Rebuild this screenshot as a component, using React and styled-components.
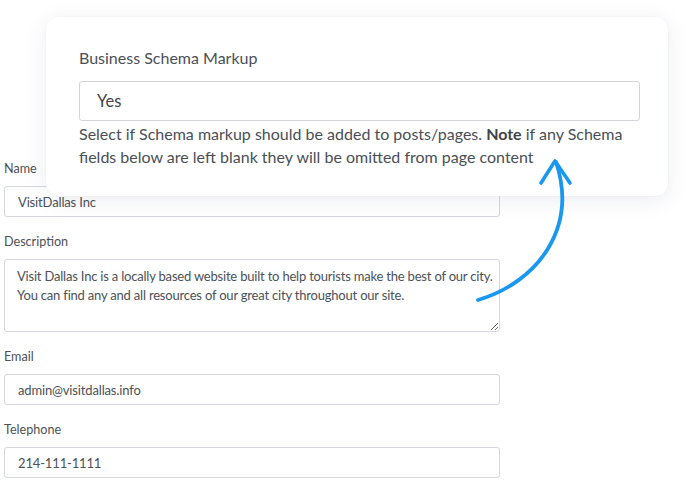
import React from "react";
import styled, { createGlobalStyle } from "styled-components";

const Global = createGlobalStyle`
  html, body { margin: 0; padding: 0; background: #ffffff; }
  body { font-family: Lato, "Noto Sans", sans-serif; }
`;

const Page = styled.div`
  position: relative;
  width: 686px;
  height: 485px;
  overflow: hidden;
  background: #ffffff;
`;

const Form = styled.div`
  display: flex;
  flex-direction: column;
  gap: 17px;
  width: 496px;
  padding: 161px 0 0 4px;
`;

const Field = styled.div`
  display: flex;
  flex-direction: column;
  gap: 9px;
`;

const Label = styled.label`
  font-size: 12.6px;
  line-height: 16px;
  color: #4b5157;
`;

const Input = styled.input`
  box-sizing: border-box;
  width: 100%;
  height: 31px;
  padding: 0 13px;
  border: 1px solid #d3d7dd;
  border-radius: 3px;
  font-family: Lato, "Noto Sans", sans-serif;
  font-size: 13px;
  letter-spacing: -0.15px;
  color: #4b5157;
  background: #fff;
  outline: none;
`;

const TextArea = styled.textarea`
  box-sizing: border-box;
  width: 100%;
  height: 73px;
  padding: 7px 12px;
  border: 1px solid #d3d7dd;
  border-radius: 3px;
  font-family: Lato, "Noto Sans", sans-serif;
  font-size: 13px;
  letter-spacing: -0.2px;
  line-height: 19px;
  color: #4b5157;
  background: #fff;
  outline: none;
  white-space: pre;
  overflow: hidden;
`;

const Card = styled.div`
  position: absolute;
  left: 46px;
  top: 17px;
  width: 622px;
  height: 179px;
  box-sizing: border-box;
  padding: 30px 28px 0 33px;
  background: #ffffff;
  border-radius: 13px;
  box-shadow: 0 4px 22px rgba(40, 50, 110, 0.09), 0 0 2px rgba(40, 50, 110, 0.05);
  display: flex;
  flex-direction: column;
`;

const CardLabel = styled.div`
  font-size: 16px;
  line-height: 22px;
  color: #4a4f56;
  margin-bottom: 12px;
`;

const SelectBox = styled.div`
  box-sizing: border-box;
  width: 561px;
  height: 40px;
  padding-left: 17px;
  display: flex;
  align-items: center;
  border: 1.5px solid #d2d5da;
  border-radius: 3px;
  font-size: 16.5px;
  color: #3f444a;
`;

const Help = styled.p`
  margin: 1px 0 0;
  font-size: 16px;
  line-height: 23px;
  color: #4a4f56;
  white-space: nowrap;
  b { font-weight: 700; color: #3f444a; }
`;

const Arrow = styled.svg`
  position: absolute;
  left: 0;
  top: 0;
  pointer-events: none;
`;

export default function App() {
  return (
    <Page>
      <Global />
      <Form>
        <Field>
          <Label>Name</Label>
          <Input readOnly value="VisitDallas Inc" />
        </Field>
        <Field>
          <Label>Description</Label>
          <TextArea
            readOnly
            value={"Visit Dallas Inc is a locally based website built to help tourists make the best of our city.\nYou can find any and all resources of our great city throughout our site."}
          />
        </Field>
        <Field>
          <Label>Email</Label>
          <Input readOnly value="admin@visitdallas.info" />
        </Field>
        <Field>
          <Label>Telephone</Label>
          <Input readOnly value="214-111-1111" />
        </Field>
      </Form>
      <Card>
        <CardLabel>Business Schema Markup</CardLabel>
        <SelectBox>Yes</SelectBox>
        <Help>
          Select if Schema markup should be added to posts/pages. <b>Note</b> if any Schema
          <br />
          fields below are left blank they will be omitted from page content
        </Help>
      </Card>
      <Arrow width="686" height="485" viewBox="0 0 686 485">
        <path
          d="M478 300 C 538 282, 578 228, 556 162"
          fill="none"
          stroke="#1a97ee"
          strokeWidth="3.8"
          strokeLinecap="round"
        />
        <path
          d="M541 183 L 555 161 L 570 183"
          fill="none"
          stroke="#1a97ee"
          strokeWidth="3.6"
          strokeLinecap="round"
          strokeLinejoin="round"
        />
      </Arrow>
    </Page>
  );
}
